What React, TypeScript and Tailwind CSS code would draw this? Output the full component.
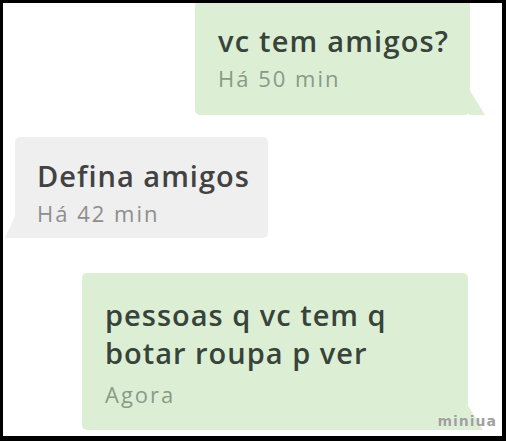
import React from "react";

const font = { fontFamily: '"Open Sans", "Noto Sans", sans-serif' };

const App = () => {
  return (
    <div
      className="relative w-[506px] h-[441px] bg-white border-black border-l-[3px] border-t-[3px] border-r-[4px] border-b-[5px] overflow-hidden flex flex-col"
      style={font}
    >
      {/* sent */}
      <div className="relative self-end mr-[32px] w-[275px] h-[112px] bg-[#dcefd5] rounded-b-[5px] pl-[23px] pt-[20px]">
        <p className="text-[29px] leading-[35px] tracking-[1.2px] font-semibold text-[#38433a]">vc tem amigos?</p>
        <p className="mt-[3px] text-[22px] leading-[35px] tracking-[2px] font-medium text-[#8a9a88]">Há 50 min</p>
        <svg className="absolute -right-[15px] bottom-0" width="16" height="26" viewBox="0 0 16 26">
          <polygon points="0,0 16,26 0,26" fill="#dcefd5" />
        </svg>
      </div>

      {/* received */}
      <div className="relative self-start ml-[12px] mt-[22px] w-[253px] h-[101px] bg-[#efefef] rounded-[5px] rounded-bl-none pl-[22px] pt-[21px]">
        <p className="text-[29px] leading-[35px] tracking-[1px] font-semibold text-[#424242]">Defina amigos</p>
        <p className="mt-[3px] text-[22px] leading-[35px] tracking-[2px] font-medium text-[#8e8e8e]">Há 42 min</p>
        <svg className="absolute -left-[10px] bottom-0" width="11" height="24" viewBox="0 0 11 24">
          <polygon points="11,0 11,24 0,24" fill="#efefef" />
        </svg>
      </div>

      {/* sent */}
      <div className="relative self-start ml-[79px] mt-[35px] w-[386px] h-[157px] bg-[#dcefd5] rounded-[5px] rounded-br-none pl-[23px] pt-[23px]">
        <p className="text-[29px] leading-[38px] tracking-[1px] font-semibold text-[#38433a]">
          pessoas q vc tem q
          <br />
          botar roupa p ver
        </p>
        <p className="mt-[3px] text-[22px] leading-[38px] tracking-[2px] font-medium text-[#8a9a88]">Agora</p>
        <svg className="absolute -right-[15px] bottom-0" width="16" height="26" viewBox="0 0 16 26">
          <polygon points="0,0 16,26 0,26" fill="#dcefd5" />
        </svg>
      </div>

      <span
        className="absolute right-[5px] bottom-[8px] text-[14px] leading-none tracking-[1px] text-[#a0a0a0] font-bold"
        style={{ fontFamily: '"DejaVu Sans", sans-serif', textShadow: "0 0 1px #fff" }}
      >
        miniua
      </span>
    </div>
  );
};

export default App;
